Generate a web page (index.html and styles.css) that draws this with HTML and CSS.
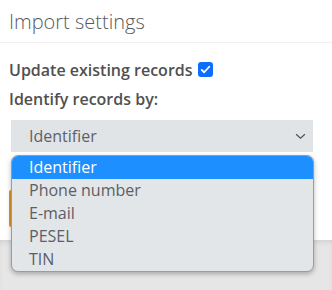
FILE: index.html
```html
<!DOCTYPE html>
<html lang="en">
<head>
<meta charset="UTF-8" />
<meta name="viewport" content="width=device-width, initial-scale=1" />
<title>Import settings</title>
<link rel="stylesheet" href="styles.css">
</head>
<body>

<div class="modal">
  <div class="modal-header">
    <h2 class="modal-title">Import settings</h2>
  </div>
  <div class="modal-body">
    <label class="field-label">Update existing records
      <span class="check" aria-checked="true" role="checkbox">
        <svg viewBox="0 0 16 16" width="11" height="11"><path d="M2.5 8.5l3.5 3.5 7.5-8" fill="none" stroke="#fff" stroke-width="2.6" stroke-linecap="round" stroke-linejoin="round"/></svg>
      </span>
    </label>
    <label class="field-label">Identify records by:</label>
    <div class="select">
      <span>Identifier</span>
      <svg class="chevron" viewBox="0 0 12 8" width="11" height="7"><path d="M1 1.5l5 4.5 5-4.5" fill="none" stroke="#4d5359" stroke-width="1.4"/></svg>
    </div>
    <button class="btn-import" aria-label="Import"></button>

    <ul class="select-list" role="listbox">
      <li class="selected">Identifier</li>
      <li>Phone number</li>
      <li>E-mail</li>
      <li>PESEL</li>
      <li>TIN</li>
    </ul>
  </div>
  <div class="modal-footer"></div>
</div>

</body>
</html>
```

FILE: styles.css
```css
* {
  box-sizing: border-box;
}
body {
  margin: 0;
  background: #fff;
  font-family: 'Open Sans', 'Noto Sans', sans-serif;
  color: #555;
}
.modal {
  width: 332px;
  height: 290px;
  display: flex;
  flex-direction: column;
  overflow: hidden;
}
.modal-header {
  height: 43px;
  padding: 0 9px;
  border-bottom: 1px solid #f0f0f0;
  display: flex;
  align-items: center;
}
.modal-title {
  margin: 0;
  font-size: 20px;
  font-weight: 300;
  color: #565a60;
}
.modal-body {
  position: relative;
  padding: 13px 9px 13px;
  display: flex;
  flex-direction: column;
  align-items: flex-start;
}
.field-label {
  font-size: 16px;
  font-weight: 600;
  line-height: 29px;
  color: #505050;
  display: flex;
  align-items: center;
  gap: 5px;
}
.check {
  width: 15px;
  height: 15px;
  border-radius: 3px;
  background: #0d6efd;
  display: inline-flex;
  align-items: center;
  justify-content: center;
  margin-top: -2px;
}
.select {
  margin: 6px 0 0 2px;
  width: 302px;
  height: 32px;
  background: #e1e4e6;
  padding: 0 7px 0 18px;
  display: flex;
  align-items: center;
  justify-content: space-between;
  font-size: 16px;
  color: #5b6269;
}
.btn-import {
  margin-top: 38px;
  height: 37px;
  width: 90px;
  border: none;
  border-radius: 2px;
  background: #e0952e;
}
.select-list {
  position: absolute;
  top: 112px;
  left: 11px;
  width: 303px;
  margin: 0;
  padding: 0;
  list-style: none;
  background: #e3e6e8;
  border: 1px solid #9c9c9c;
  border-radius: 7px;
  box-shadow: 0 2px 5px rgba(0, 0, 0, 0.28);
  overflow: hidden;
}
.select-list li {
  height: 23px;
  line-height: 23px;
  padding-left: 17px;
  font-size: 16px;
  color: #5a6066;
}
.select-list li.selected {
  background: #1e8fff;
  color: #fff;
}
.modal-footer {
  flex: 1;
  background: #e6e6e6;
  box-shadow: inset 0 4px 6px -3px rgba(0, 0, 0, 0.12);
}
```
